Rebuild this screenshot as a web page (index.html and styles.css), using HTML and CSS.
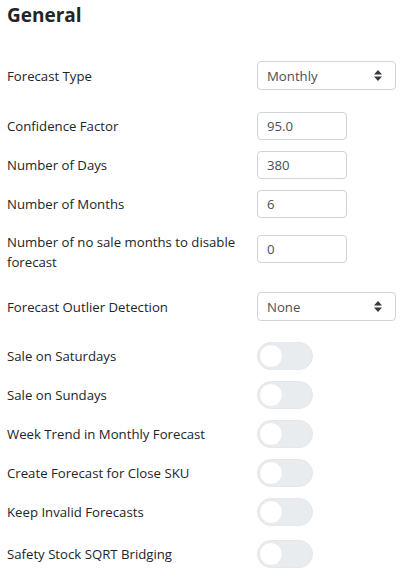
FILE: index.html
```html
<!DOCTYPE html>
<html>
<head>
<meta charset="utf-8">
<link rel="stylesheet" href="styles.css">
</head>
<body>
<div class="panel">
  <h2 class="title">General</h2>
  <div class="row row-first">
    <div class="label">Forecast Type</div>
    <div class="select"><span>Monthly</span><svg class="caret" width="8" height="11" viewBox="0 0 8 11"><path d="M4 0 L8 4.5 H0 Z M0 6.5 H8 L4 11 Z" fill="#343a40"/></svg></div>
  </div>
  <div class="row row-gap-lg">
    <div class="label">Confidence Factor</div>
    <div class="input">95.0</div>
  </div>
  <div class="row">
    <div class="label">Number of Days</div>
    <div class="input">380</div>
  </div>
  <div class="row">
    <div class="label">Number of Months</div>
    <div class="input">6</div>
  </div>
  <div class="row row-tall">
    <div class="label">Number of no sale months to disable forecast</div>
    <div class="input input-raised">0</div>
  </div>
  <div class="row row-select2">
    <div class="label">Forecast Outlier Detection</div>
    <div class="select"><span>None</span><svg class="caret" width="8" height="11" viewBox="0 0 8 11"><path d="M4 0 L8 4.5 H0 Z M0 6.5 H8 L4 11 Z" fill="#343a40"/></svg></div>
  </div>
  <div class="row row-toggle-first">
    <div class="label">Sale on Saturdays</div>
    <div class="toggle"><div class="knob"></div></div>
  </div>
  <div class="row">
    <div class="label">Sale on Sundays</div>
    <div class="toggle"><div class="knob"></div></div>
  </div>
  <div class="row">
    <div class="label">Week Trend in Monthly Forecast</div>
    <div class="toggle"><div class="knob"></div></div>
  </div>
  <div class="row">
    <div class="label">Create Forecast for Close SKU</div>
    <div class="toggle"><div class="knob"></div></div>
  </div>
  <div class="row">
    <div class="label">Keep Invalid Forecasts</div>
    <div class="toggle"><div class="knob"></div></div>
  </div>
  <div class="row row-last">
    <div class="label">Safety Stock SQRT Bridging</div>
    <div class="toggle"><div class="knob"></div></div>
  </div>
</div>
</body>
</html>
```
FILE: styles.css
```css
html, body {
  margin: 0;
  padding: 0;
  background: #ffffff;
}
body {
  font-family: "Open Sans", "Noto Sans", "Liberation Sans", sans-serif;
  font-size: 13.2px;
  color: #212529;
}
.panel {
  padding: 0 7px;
}
.title {
  margin: 0;
  padding-top: 1px;
  font-size: 19px;
  font-weight: 700;
  line-height: 28px;
  color: #212529;
}
.row {
  display: flex;
  align-items: center;
  min-height: 28px;
  margin-top: 11px;
}
.row-first { margin-top: 32px; height: 29px; }
.row-gap-lg { margin-top: 22px; }
.row-tall { margin-top: 14px; height: 40px; }
.row-select2 { margin-top: 20px; height: 29px; }
.row-toggle-first { margin-top: 21px; }
.row-last { margin-top: 14px; }
.label {
  flex: 0 0 250px;
  box-sizing: border-box;
  padding-right: 10px;
  line-height: 20px;
}
.select {
  box-sizing: border-box;
  width: 139px;
  height: 29px;
  border: 1px solid #ced4da;
  border-radius: 4px;
  display: flex;
  align-items: center;
  justify-content: space-between;
  padding: 0 13px 0 9px;
  color: #495057;
}
.caret { display: block; }
.input {
  box-sizing: border-box;
  width: 90px;
  height: 28px;
  border: 1px solid #ced4da;
  border-radius: 4px;
  display: flex;
  align-items: center;
  padding: 0 9px;
  color: #495057;
}
.input-raised { margin-top: -6px; }
.toggle {
  box-sizing: border-box;
  width: 56px;
  height: 28px;
  border-radius: 14px;
  background: #e9ecef;
  border: 1px solid #e4e7eb;
  padding: 1px;
}
.knob {
  box-sizing: border-box;
  width: 24px;
  height: 24px;
  border-radius: 50%;
  background: #ffffff;
  border: 1px solid #e6e9ec;
}
```
